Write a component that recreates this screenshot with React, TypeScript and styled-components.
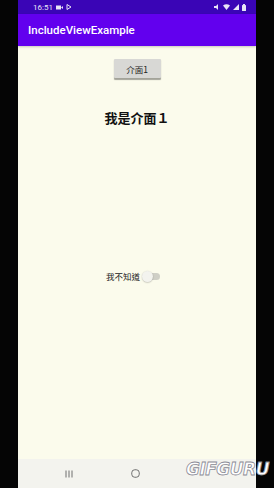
import styled, { createGlobalStyle } from "styled-components";

const Global = createGlobalStyle`
    html, body { margin: 0; padding: 0; background: #000; }
    body { font-family: Roboto, "Noto Sans CJK TC", sans-serif; }
`;

const Screen = styled.div`
    position: relative;
    width: 274px;
    height: 488px;
    display: flex;
    background: #050505;
    overflow: hidden;
`;

const Phone = styled.div`
    width: 238px;
    margin-left: 18px;
    display: flex;
    flex-direction: column;
    background: #fbfbec;
`;

const StatusBar = styled.div`
    height: 14px;
    background: #3a05b6;
    display: flex;
    align-items: center;
    justify-content: space-between;
    padding: 0 10px 0 15px;
    color: #e8e4f6;
    font-size: 8px;
`;

const StatusGroup = styled.div`
    display: flex;
    align-items: center;
    gap: 3px;
`;

const Toolbar = styled.div`
    height: 32px;
    background: #6200ee;
    display: flex;
    align-items: center;
    padding-left: 10px;
    color: #fff;
    font-size: 11.5px;
    font-weight: 500;
    box-shadow: 0 1px 2px rgba(0, 0, 0, 0.2);
`;

const Content = styled.div`
    flex: 1;
    display: flex;
    flex-direction: column;
    align-items: center;
    padding-top: 13px;
`;

const PageButton = styled.button`
    width: 47px;
    height: 19px;
    border: none;
    border-radius: 1px;
    background: #d8d8d5;
    box-shadow: 0 1.5px 1px rgba(0, 0, 0, 0.35);
    font-family: "Noto Sans CJK TC", sans-serif;
    font-size: 8.5px;
    color: #222;
    padding: 0;
`;

const Heading = styled.div`
    margin-top: 32px;
    font-family: "Noto Sans CJK TC", sans-serif;
    font-size: 13px;
    font-weight: 700;
    color: #111;
    line-height: 16px;
`;

const SwitchRow = styled.label`
    margin-top: 144px;
    padding-right: 8px;
    display: flex;
    align-items: center;
    gap: 2px;
    font-family: "Noto Sans CJK TC", sans-serif;
    font-size: 8.5px;
    color: #222;
`;

const Track = styled.span`
    position: relative;
    width: 14px;
    height: 7px;
    border-radius: 4px;
    background: #cfcfc6;
    margin-left: 4px;
`;

const Thumb = styled.span`
    position: absolute;
    left: -4px;
    top: -2px;
    width: 11px;
    height: 11px;
    border-radius: 50%;
    background: #f3f3ee;
    box-shadow: 0 0.5px 1.5px rgba(0, 0, 0, 0.3);
`;

const NavBar = styled.div`
    height: 29px;
    background: #f3f3ee;
    display: flex;
    align-items: center;
    justify-content: center;
    gap: 52px;
    padding-right: 4px;
`;

const NavIcon = styled.div`
    width: 14px;
    display: flex;
    justify-content: center;
`;

const Watermark = styled.div`
    position: absolute;
    right: 5px;
    bottom: 9px;
    font-family: "DejaVu Sans", sans-serif;
    font-size: 17px;
    font-weight: 900;
    font-style: italic;
    letter-spacing: -0.5px;
    color: #fff;
    -webkit-text-stroke: 0.8px #8a8a95;
`;

export default function App() {
    return <Screen>
        <Global />
        <Phone>
            <StatusBar>
                <StatusGroup>
                    <span>16:51</span>
                    <svg width="7" height="5" viewBox="0 0 7 5"><rect x="0" y="0.5" width="5" height="4" fill="#e8e4f6" /><path d="M5 2.5 L7 1 V4 Z" fill="#e8e4f6" /></svg>
                    <svg width="6" height="6" viewBox="0 0 6 6"><path d="M1 0.5 V5.5 M1 0.5 L5 3 L1 5.5" stroke="#e8e4f6" strokeWidth="1" fill="none" /></svg>
                </StatusGroup>
                <StatusGroup>
                    <svg width="6" height="6" viewBox="0 0 6 6"><path d="M0 2 H2 L4 0 V6 L2 4 H0 Z" fill="#e8e4f6" /></svg>
                    <svg width="7" height="6" viewBox="0 0 7 6"><path d="M0 1.5 Q3.5 -1 7 1.5 L3.5 6 Z" fill="#e8e4f6" /></svg>
                    <svg width="6" height="6" viewBox="0 0 6 6"><path d="M0 6 L6 0 V6 Z" fill="#e8e4f6" /></svg>
                    <svg width="4" height="7" viewBox="0 0 4 7"><rect x="0" y="1" width="4" height="6" rx="0.5" fill="#e8e4f6" /><rect x="1" y="0" width="2" height="1" fill="#e8e4f6" /></svg>
                </StatusGroup>
            </StatusBar>
            <Toolbar>IncludeViewExample</Toolbar>
            <Content>
                <PageButton>介面1</PageButton>
                <Heading>我是介面１</Heading>
                <SwitchRow>
                    我不知道
                    <Track><Thumb /></Track>
                </SwitchRow>
            </Content>
            <NavBar>
                <NavIcon>
                    <svg width="8" height="8" viewBox="0 0 8 8"><path d="M1 0.5 V7.5 M4 0.5 V7.5 M7 0.5 V7.5" stroke="#6f6f6f" strokeWidth="1" /></svg>
                </NavIcon>
                <NavIcon>
                    <svg width="9" height="9" viewBox="0 0 9 9"><rect x="0.75" y="0.75" width="7.5" height="7.5" rx="3" fill="none" stroke="#6f6f6f" strokeWidth="1" /></svg>
                </NavIcon>
                <NavIcon />
            </NavBar>
        </Phone>
        <Watermark>GIFGURU</Watermark>
    </Screen>;
}
